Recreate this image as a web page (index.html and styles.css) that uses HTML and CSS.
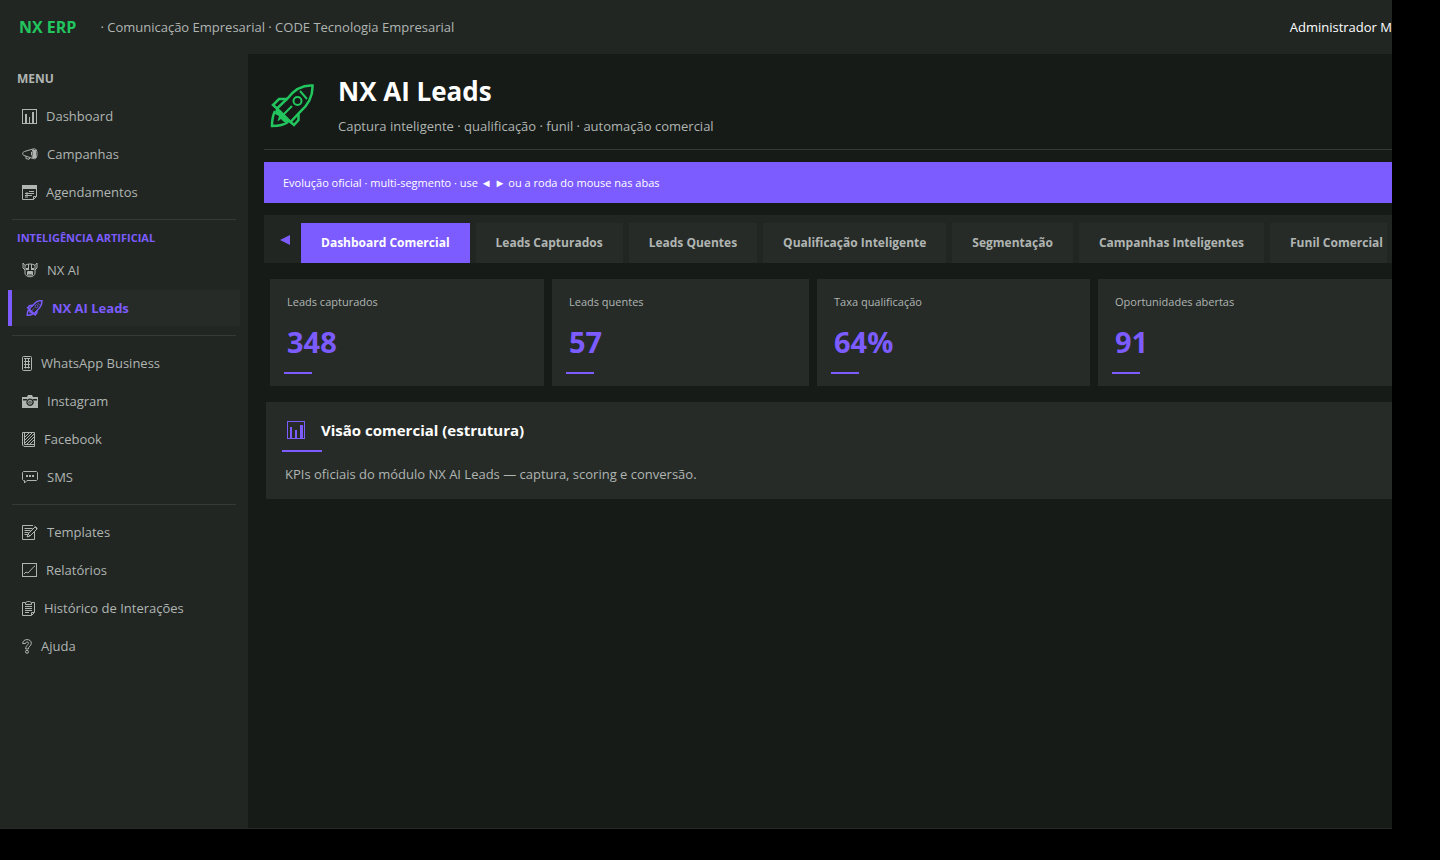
FILE: index.html
```html
<!DOCTYPE html>
<html lang="pt-BR">
<head>
    <meta charset="UTF-8">
    <meta name="viewport" content="width=device-width, initial-scale=1.0">
    <title>NX AI Leads</title>
    <link rel="stylesheet" href="styles.css">
</head>
<body>

<div class="app">
    <header class="topbar">
        <strong class="brand">NX ERP</strong>
        <span class="tagline">· Comunicação Empresarial · CODE Tecnologia Empresarial</span>
        <span class="user">Administrador M</span>
    </header>

    <div class="layout">
        <nav class="sidebar">
            <div class="nav-label">MENU</div>
            <a class="nav-item" href="#">
                <svg width="15" height="15" viewBox="0 0 15 15"><rect x=".5" y=".5" width="14" height="14"/><path class="fill" d="M3 5h2v9H3zM7 8h1v6H7zM10 3h2v11h-2z"/></svg>
                Dashboard
            </a>
            <a class="nav-item" href="#">
                <svg width="16" height="12" viewBox="0 0 16 12"><path d="M11.500.8 2.500 3.500C.2 4 .2 7 2 7.500l9.500 3.200M4 8v2.500l3 .8 1-1.800"/><ellipse cx="12.500" cy="5.800" rx="2.500" ry="5"/><path class="fill" d="M11 2h3v8h-3zM9 4h1v3H9z"/></svg>
                Campanhas
            </a>
            <a class="nav-item" href="#">
                <svg width="15" height="15" viewBox="0 0 15 15"><path d="M.5.5h14v11l-3 3H.5zM14.500 11.500h-3v3"/><path class="fill" d="M0 0h15v4H0z"/><path d="M7 6.500h5M3 8.500h9M3 10.500h7M3 12h3M5 7v4"/></svg>
                Agendamentos
            </a>

            <hr>
            <div class="nav-label ai">INTELIGÊNCIA ARTIFICIAL</div>
            <a class="nav-item" href="#">
                <svg width="16" height="16" viewBox="0 0 16 16"><path d="M3 3.500 1 1v5l2 2M13 3.500 15 1v5l-2 2M3 3.500C5 1.500 11 1.500 13 3.500V11c0 5-10 5-10 0zM5.500 9.500h5V13h-5zM6.500 2v4M9.500 2v4"/><path class="fill" d="M4 6h3v2H4zM9 6h3v2H9zM6 10h4v2H6z"/></svg>
                NX AI
            </a>
            <a class="nav-item active" href="#">
                <svg width="17" height="16" viewBox="0 0 44 44"><use href="#rocket"/></svg>
                NX AI Leads
            </a>

            <hr>
            <a class="nav-item" href="#">
                <svg width="10" height="15" viewBox="0 0 10 15"><rect x=".5" y=".5" width="9" height="14" rx="1"/><path d="M2 2.500h6M2 5.500h6M2 8.500h6M2 11.500h6M3.500 3v9.500M6.500 3v9.500"/></svg>
                WhatsApp Business
            </a>
            <a class="nav-item" href="#">
                <svg width="16" height="13" viewBox="0 0 16 13"><path class="fill" fill-rule="evenodd" d="M0 2h5l1-2h4l1 2h5v11H0zM1 4v1.500h3.500L5.500 4zM10.500 4l1 1.500H15V4zM8 3.500a3.700 3.700 0 1 0 .1 0z"/><circle cx="8" cy="7.200" r="2"/><path class="fill" d="M7.500 6h1v2.500h-1z"/></svg>
                Instagram
            </a>
            <a class="nav-item" href="#">
                <svg width="13" height="15" viewBox="0 0 13 15"><path d="M.5 2V.5h12v14H2L.5 13zM2.500.5v12h10M3 5l4-4M3 8l7-7M3 11l9-9M5 12l7-7M8 12l4-4"/></svg>
                Facebook
            </a>
            <a class="nav-item" href="#">
                <svg width="16" height="13" viewBox="0 0 16 13"><path d="M1.500.5h13l1 1v7l-1 1H5L2.500 12V9.500h-1l-1-1v-7z"/><path class="fill" d="M4 4h2v2H4zM7 4h2v2H7zM10 4h2v2h-2z"/></svg>
                SMS
            </a>

            <hr>
            <a class="nav-item" href="#">
                <svg width="16" height="15" viewBox="0 0 16 15"><path d="M11 .5H.5v14h12V7M2.500 3.500h8M2.500 5.500h6M2.500 7.500h4M2.500 9.500h3M5 12l1-3 7-7 2 2-7 7zM6 9l2 2M12.500 1l3 2.500"/></svg>
                Templates
            </a>
            <a class="nav-item" href="#">
                <svg width="15" height="14" viewBox="0 0 15 14"><rect x=".5" y=".5" width="14" height="13"/><path d="M2 11l2-2 2 1 6-6.500 1-.5"/></svg>
                Relatórios
            </a>
            <a class="nav-item" href="#">
                <svg width="13" height="15" viewBox="0 0 13 15"><path d="M3 1.500H.5v13h9l3-3v-10H10M3.500 3.500v-2l2-1h2l2 1v2zM12 11.500H9.500V14M3 5.500h7M3 7.500h7M3 9.500h7M3 11.500h4"/></svg>
                Histórico de Interações
            </a>
            <a class="nav-item" href="#">
                <svg width="10" height="15" viewBox="0 0 10 15"><path d="M.7 4.500C.7-.7 9.300-.7 9.300 4.200c0 3-3 2.800-3 5.800H3.700c0-4 2.800-4 2.800-5.800 0-1.600-3-1.600-3 .3z"/><circle cx="5" cy="12.800" r="1.500"/></svg>
                Ajuda
            </a>
        </nav>

        <main class="content">
            <header class="page-head">
                <svg class="page-icon" width="44" height="44" viewBox="0 0 44 44">
                    <g id="rocket">
                        <path d="M42.500 1.500C33 1 24 6 18 14L7 24.500 20.500 38 30 28C38 21 43 12 42.500 1.500Z"/>
                        <path d="M18 15H9L3 21 7 24.500M28.500 29V36L24 41 20 37.500"/>
                        <path d="M5 27C3 31 2 37 2 42 7 42 14 41 18 38"/>
                        <path class="thin" d="M30 7 37 15M22 22 13 31"/>
                        <circle class="thin" cx="27.500" cy="17" r="4"/>
                        <path class="fill" d="M6 24 20.500 38.500 14 38 11 35 7.500 37.500 9 32 5 30Z"/>
                    </g>
                </svg>
                <div>
                    <h1>NX AI Leads</h1>
                    <p>Captura inteligente · qualificação · funil · automação comercial</p>
                </div>
            </header>

            <div class="notice">Evolução oficial · multi-segmento · use ◄ ► ou a roda do mouse nas abas</div>

            <div class="tabbar">
                <button class="scroll" type="button" aria-label="Anterior"><svg width="10" height="10" viewBox="0 0 10 10"><path d="M0 5 10 0V10Z"/></svg></button>
                <div class="tabs">
                    <button class="tab active" type="button">Dashboard Comercial</button>
                    <button class="tab" type="button">Leads Capturados</button>
                    <button class="tab" type="button">Leads Quentes</button>
                    <button class="tab" type="button">Qualificação Inteligente</button>
                    <button class="tab" type="button">Segmentação</button>
                    <button class="tab" type="button">Campanhas Inteligentes</button>
                    <button class="tab" type="button">Funil Comercial</button>
                </div>
            </div>

            <section class="kpis">
                <div class="kpi"><span>Leads capturados</span><strong>348</strong></div>
                <div class="kpi"><span>Leads quentes</span><strong>57</strong></div>
                <div class="kpi"><span>Taxa qualificação</span><strong>64%</strong></div>
                <div class="kpi"><span>Oportunidades abertas</span><strong>91</strong></div>
            </section>

            <section class="panel">
                <h2>
                    <svg width="18" height="18" viewBox="0 0 18 18"><rect x=".5" y=".5" width="17" height="17"/><path class="fill" d="M3 6h2v11H3zM8 9h2v8H8zM13 4h3v13h-3z"/></svg>
                    Visão comercial (estrutura)
                </h2>
                <p>KPIs oficiais do módulo NX AI Leads — captura, scoring e conversão.</p>
            </section>
        </main>
    </div>
</div>

</body>
</html>
```

FILE: styles.css
```css
* {
    box-sizing: border-box;
}

body {
    margin: 0;
    padding: 0 48px 31px 0;
    background: #000;
    color: #b0b5b2;
    font-family: "Open Sans", "Noto Sans", sans-serif;
    font-size: 13px;
    line-height: 18px;
}

h1, h2, p {
    margin: 0;
}

button {
    border: none;
    font: inherit;
    cursor: pointer;
}

svg {
    flex: none;
    fill: none;
    stroke: currentColor;
    stroke-width: 1;
}

svg .fill {
    fill: currentColor;
    stroke: none;
}

.app {
    display: flex;
    flex-direction: column;
    min-height: calc(100vh - 31px);
    overflow: hidden;
    background: #161b18;
    border-bottom: 1px solid #262b28;
}

.topbar {
    display: flex;
    align-items: center;
    height: 54px;
    padding-left: 19px;
    background: #212623;
    white-space: nowrap;
}

.brand {
    color: #22c55e;
    font-size: 16px;
}

.tagline {
    margin-left: 24px;
}

.user {
    margin-left: auto;
    color: #fff;
}

.layout {
    display: flex;
    flex: 1;
}

/* sidebar */
.sidebar {
    display: flex;
    flex: none;
    flex-direction: column;
    gap: 2px;
    width: 248px;
    padding: 16px 8px;
    background: #212623;
}

.nav-label {
    padding: 0 9px 8px;
    font-size: 12px;
    font-weight: bold;
}

.nav-label.ai {
    padding-bottom: 3px;
    color: #7c5cff;
    font-size: 11px;
}

.nav-item {
    display: flex;
    align-items: center;
    gap: 9px;
    height: 36px;
    padding-left: 14px;
    color: inherit;
    text-decoration: none;
}

.nav-item.active {
    border-left: 4px solid #7c5cff;
    background: #262b28;
    color: #7c5cff;
    font-weight: bold;
}

.nav-item.active svg {
    stroke-width: 4;
}

.sidebar hr {
    width: 224px;
    height: 1px;
    margin: 7px 4px;
    border: none;
    background: #343a36;
}

/* main area */
.content {
    flex: 1;
    min-width: 0;
    padding-left: 16px;
}

.page-head {
    display: flex;
    align-items: center;
    gap: 24px;
    height: 96px;
    padding: 4px 0 0 6px;
    border-bottom: 1px solid #343a36;
}

.page-head h1 {
    margin-bottom: 8px;
    color: #fff;
    font-size: 26px;
    line-height: 36px;
}

.page-icon {
    margin-top: 4px;
    color: #22c55e;
    stroke-width: 2.5;
}

.page-icon .thin {
    stroke-width: 2;
}

.notice {
    margin-top: 12px;
    padding: 12px 19px 11px;
    background: #7c5cff;
    color: #fff;
    font-size: 11px;
}

.tabbar {
    display: flex;
    margin-top: 12px;
    padding: 8px 5px 0 0;
    background: #212623;
}

.scroll {
    flex: none;
    width: 37px;
    padding: 0 0 6px 5px;
    background: none;
    color: #7c5cff;
}

.scroll path {
    fill: currentColor;
    stroke: none;
}

.tabs {
    display: flex;
    gap: 6px;
    overflow: hidden;
}

.tab {
    flex: none;
    height: 40px;
    padding: 0 20px;
    background: #262b28;
    color: #b0b5b2;
    font-size: 12px;
    font-weight: bold;
}

.tab.active {
    background: #7c5cff;
    color: #fff;
}

.kpis {
    display: grid;
    grid-template-columns: 274fr 257fr 273fr 294fr;
    gap: 8px;
    margin: 16px 0 0 6px;
}

.kpi {
    padding: 14px 14px 12px;
    background: #262b28;
}

.kpi span,
.kpi strong {
    display: block;
    padding-left: 3px;
}

.kpi span {
    font-size: 11px;
}

.kpi strong {
    margin-top: 11px;
    color: #7c5cff;
    font-size: 29px;
    line-height: 40px;
}

.kpi::after,
.panel h2::after {
    content: "";
    display: block;
    width: 28px;
    height: 2px;
    margin-top: 10px;
    background: #7c5cff;
}

.panel {
    margin: 16px 0 0 2px;
    padding: 16px;
    background: #262b28;
}

.panel h2 {
    display: flex;
    flex-wrap: wrap;
    align-items: center;
    column-gap: 16px;
    padding-left: 5px;
    color: #fff;
    font-size: 15px;
    line-height: 24px;
}

.panel h2 svg {
    color: #7c5cff;
}

.panel h2::after {
    flex: none;
    width: 40px;
    margin: 8px calc(100% - 35px) 0 -5px;
}

.panel p {
    margin-top: 13px;
    padding-left: 3px;
}
```
